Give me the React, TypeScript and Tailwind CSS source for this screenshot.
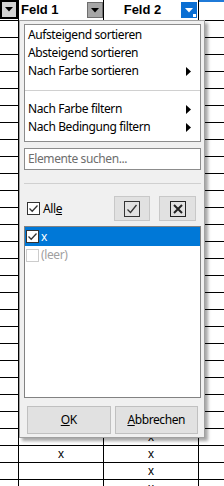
import React from "react";

const rowCount = 28;
// which rows carry an "x" (index 0 = first row under the header)
const colB = new Set([25]);
const colC = new Set([24, 25, 26, 27]);

function DownTri({ color }: { color: string }) {
  return (
    <svg width="8" height="5" viewBox="0 0 8 5">
      <path d="M0 0 H8 L4 4.5 Z" fill={color} />
    </svg>
  );
}

function RightTri() {
  return (
    <svg width="5" height="9" viewBox="0 0 5 9">
      <path d="M0 0 L5 4.5 L0 9 Z" fill="#000" />
    </svg>
  );
}

function CheckBox({ checked, disabled }: { checked?: boolean; disabled?: boolean }) {
  return (
    <svg width="13" height="13" viewBox="0 0 13 13" className="shrink-0">
      <rect x="0.5" y="0.5" width="12" height="12" fill="#fff" stroke={disabled ? "#cccccc" : "#333333"} />
      {checked && <path d="M2.5 6.5 L5.2 9.2 L10.5 3.5" fill="none" stroke="#333333" strokeWidth="1.3" />}
    </svg>
  );
}

function MenuItem({ label, arrow }: { label: string; arrow?: boolean }) {
  return (
    <div className="flex h-[18px] items-center pl-[3px] pr-[9px]">
      <span className="flex-1">{label}</span>
      {arrow && <RightTri />}
    </div>
  );
}

export default function App() {
  return (
    <div className="relative h-[486px] w-[224px] overflow-hidden bg-white font-['Liberation_Sans',Arial,sans-serif] text-black">
      {/* header row */}
      <div className="flex h-[21px] border-b border-black">
        <div className="w-[19px] border-r border-black">
          <div className="h-[19px] w-[18px] bg-black p-[2px]">
            <div className="flex h-full w-full items-center justify-center bg-[#d4d4d4]">
              <DownTri color="#000" />
            </div>
          </div>
        </div>
        <div className="flex w-[85px] items-center border-r border-black pl-[2px]">
          <span className="flex-1 text-[13px] font-bold">Feld 1</span>
          <div className="flex h-[16px] w-[16px] items-center justify-center border border-[#6e6e6e] bg-[#a6a6a6]">
            <DownTri color="#000" />
          </div>
        </div>
        <div className="flex w-[95px] items-center border-r border-black pr-[1px]">
          <span className="flex-1 text-center text-[13px] font-bold">Feld 2</span>
          <div className="relative flex h-[16px] w-[16px] items-center justify-center bg-[#0b6fd3]">
            <DownTri color="#fff" />
            <div className="absolute bottom-[1px] right-[1px] h-[3px] w-[3px] bg-white" />
          </div>
        </div>
        <div className="flex-1">
          <div className="h-[2px] bg-[#1f7ad8]" />
        </div>
      </div>

      {/* data rows */}
      {Array.from({ length: rowCount }).map((_, i) => (
        <div key={i} className="flex h-[17px] border-b border-black text-[12px]">
          <div className="w-[19px] border-r border-black" />
          <div className="flex w-[85px] items-center justify-center border-r border-black">{colB.has(i) ? "x" : ""}</div>
          <div className="flex w-[95px] items-center justify-center border-r border-black">{colC.has(i) ? "x" : ""}</div>
          <div className="flex-1" />
        </div>
      ))}

      {/* autofilter popup */}
      <div className="absolute left-[19px] top-[20px] flex h-[418px] w-[186px] flex-col border border-[#a0a0a0] bg-[#f0f0f0] pl-[4px] pr-[3px] pt-[3px] font-['Noto_Sans',sans-serif] text-[12px] tracking-[-0.4px] shadow-[3px_3px_3px_rgba(0,0,0,0.35)]">
        <div className="h-[118px] border border-[#8c8c8c] bg-white pt-[1px]">
          <MenuItem label="Aufsteigend sortieren" />
          <MenuItem label="Absteigend sortieren" />
          <MenuItem label="Nach Farbe sortieren" arrow />
          <div className="h-[20px] pt-[10px]">
            <div className="h-px bg-[#d0d0d0]" />
          </div>
          <MenuItem label="Nach Farbe filtern" arrow />
          <MenuItem label="Nach Bedingung filtern" arrow />
        </div>

        <div className="mt-[6px] flex h-[22px] items-center border border-[#8c8c8c] bg-white pl-[3px] text-[#6d6d6d]">
          Elemente suchen...
        </div>

        <div className="mt-[13px] h-px bg-[#d0d0d0]" />

        <div className="mt-[12px] flex h-[25px] items-center">
          <div className="ml-[3px] flex items-center gap-[3px]">
            <CheckBox checked />
            <span>
              All<span className="underline">e</span>
            </span>
          </div>
          <div className="ml-auto flex h-[25px] w-[36px] items-center justify-center border border-[#c8c8c8] bg-[#e1e1e1]">
            <svg width="16" height="16" viewBox="0 0 16 16">
              <rect x="0.5" y="0.5" width="15" height="15" fill="none" stroke="#333" />
              <path d="M3.5 8.5 L6.5 11.5 L12.5 4" fill="none" stroke="#333" strokeWidth="1.3" />
            </svg>
          </div>
          <div className="ml-[9px] mr-[5px] flex h-[25px] w-[37px] items-center justify-center border border-[#c8c8c8] bg-[#e1e1e1]">
            <svg width="16" height="16" viewBox="0 0 16 16">
              <rect x="0.5" y="0.5" width="15" height="15" fill="none" stroke="#222" />
              <path d="M4 4 L12 12 M12 4 L4 12" fill="none" stroke="#222" strokeWidth="2" />
            </svg>
          </div>
        </div>

        <div className="mt-[5px] h-[172px] border border-[#828282] bg-white">
          <div className="flex h-[19px] items-center gap-[2px] bg-[#0078d7] pl-[1px] text-white">
            <CheckBox checked />
            <span>x</span>
          </div>
          <div className="flex h-[18px] items-center gap-[2px] pl-[1px] text-[#a0a0a0]">
            <CheckBox disabled />
            <span>(leer)</span>
          </div>
        </div>

        <div className="mt-[8px] flex h-[28px] gap-[4px] px-[3px]">
          <div className="flex flex-1 items-center justify-center border border-[#c0c0c0] bg-[#e1e1e1]">
            <span>
              <span className="underline">O</span>K
            </span>
          </div>
          <div className="flex flex-1 items-center justify-center border border-[#c0c0c0] bg-[#e1e1e1]">
            <span>
              <span className="underline">A</span>bbrechen
            </span>
          </div>
        </div>
      </div>
    </div>
  );
}
